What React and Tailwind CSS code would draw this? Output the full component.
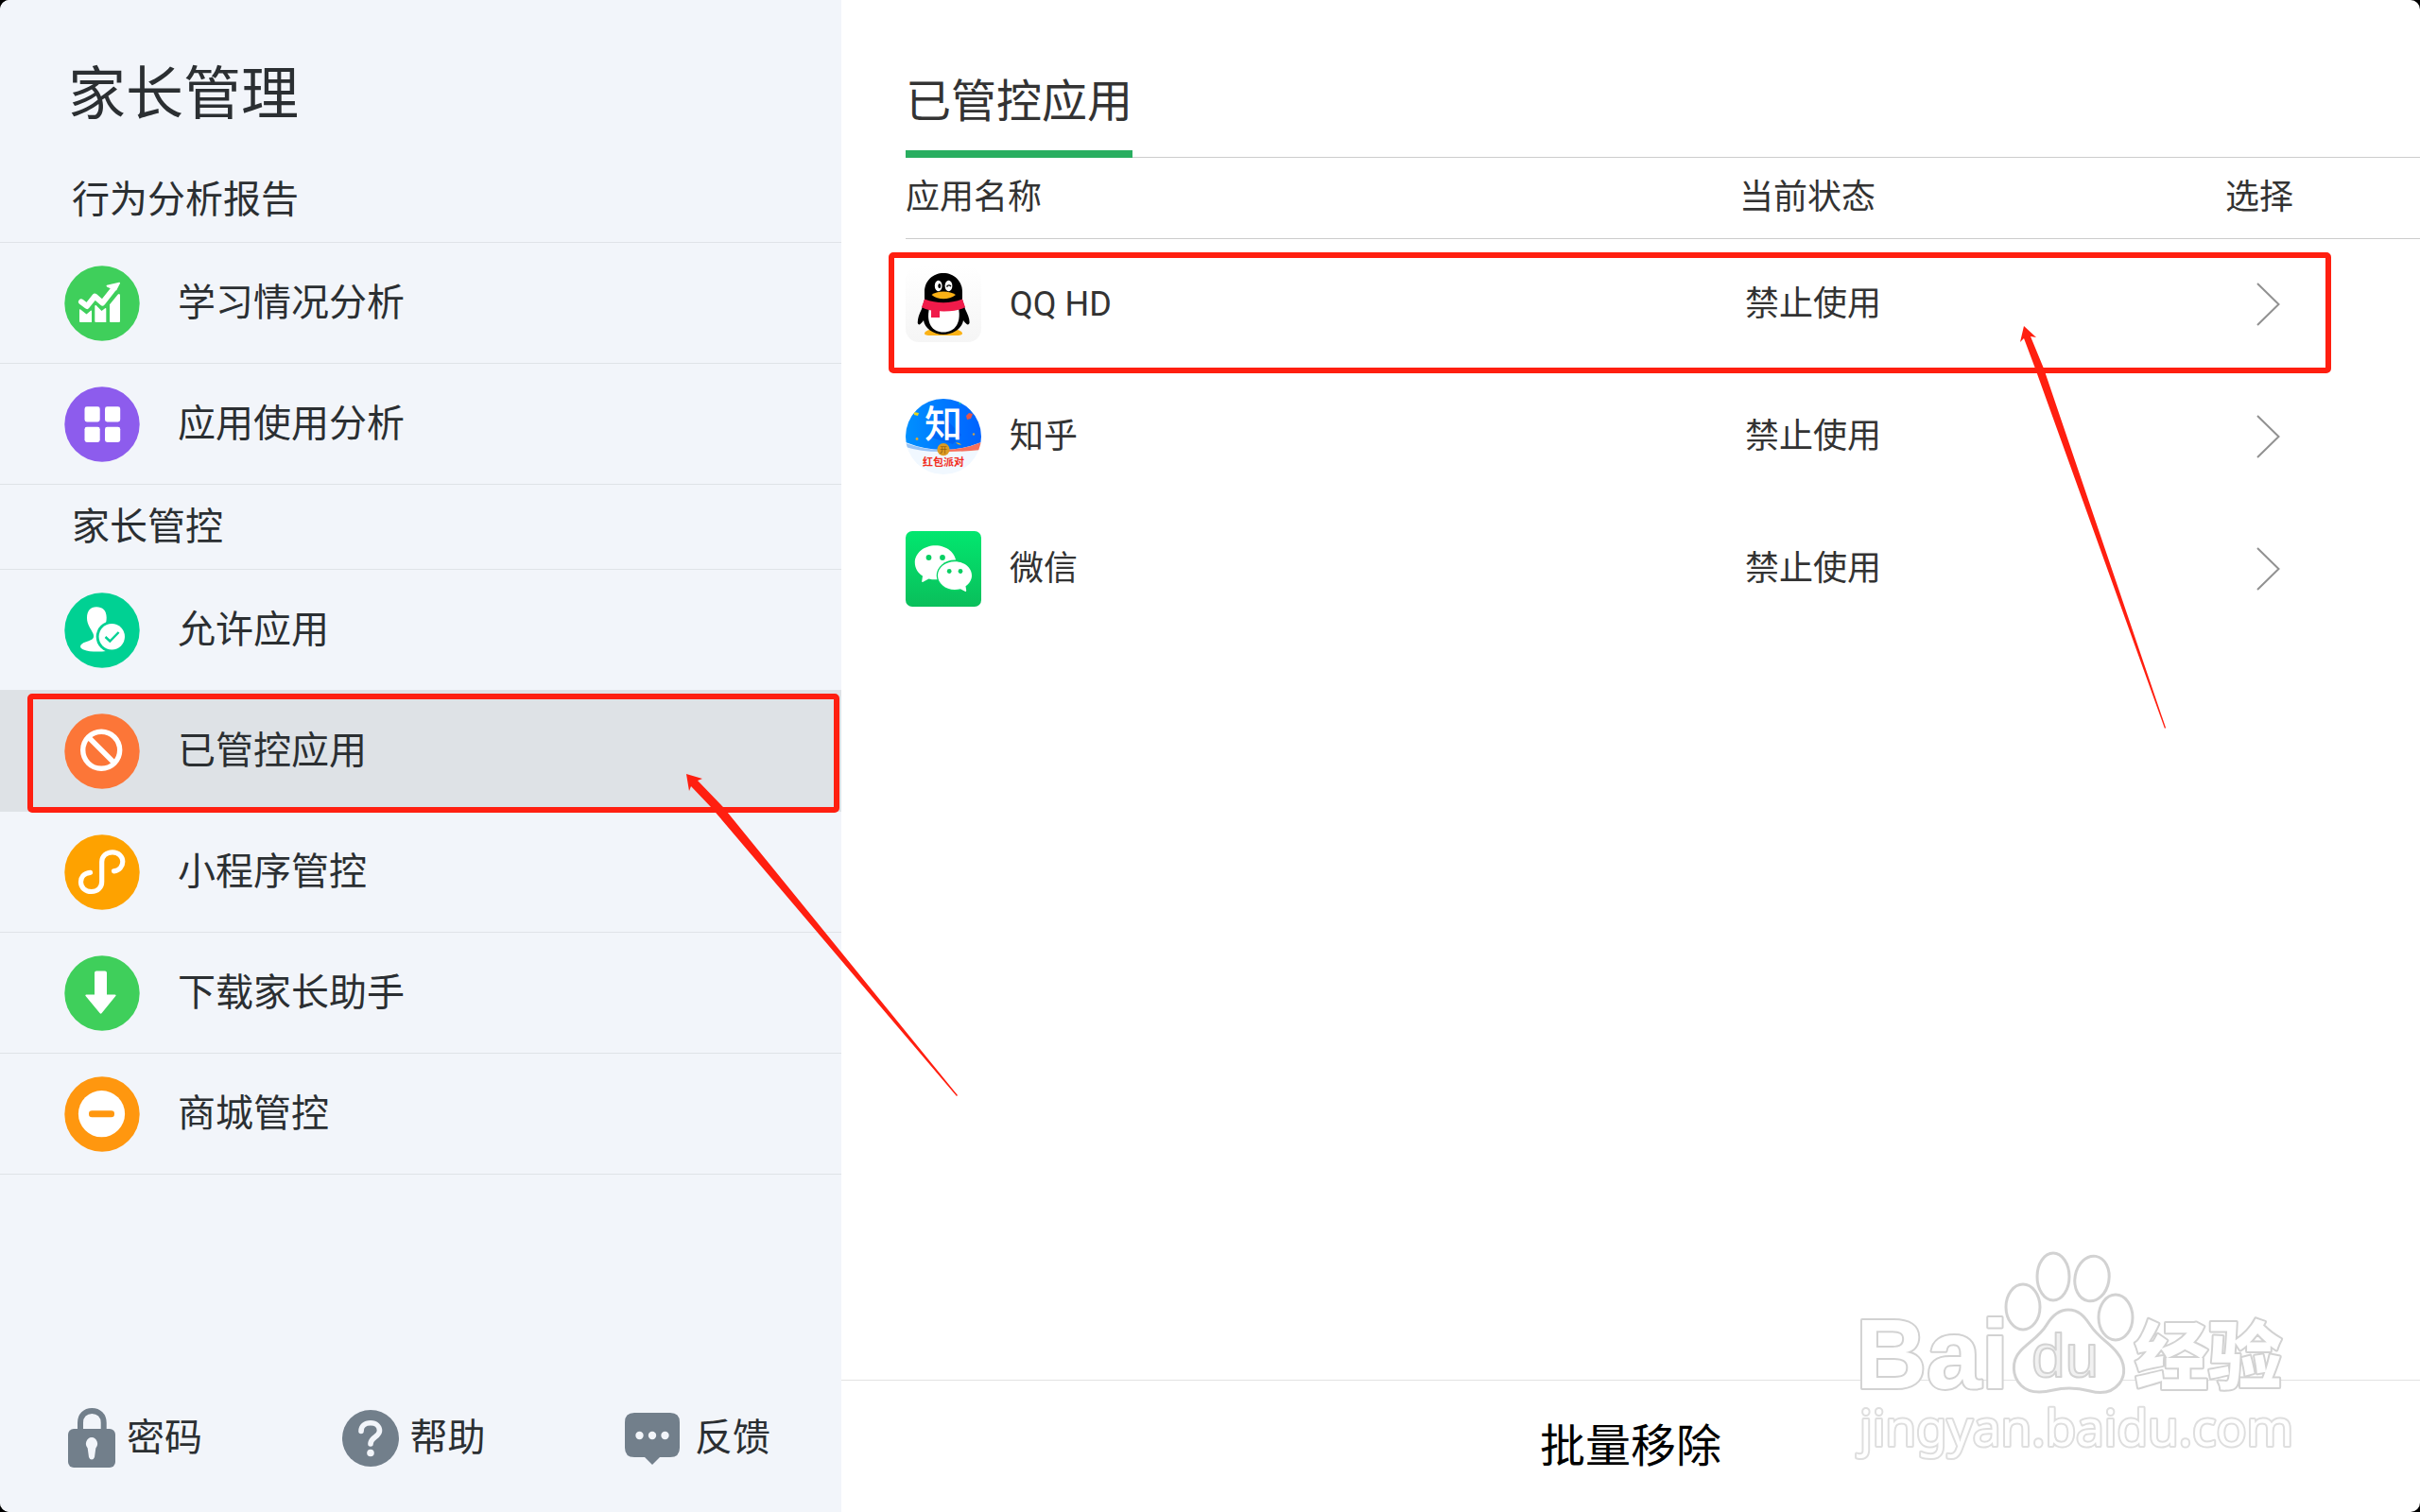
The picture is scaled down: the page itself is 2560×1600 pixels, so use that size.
import React, { useState } from "react";
import clsx from "clsx";

const ChartIcon = () => (
  <svg viewBox="0 0 80 80" className="size-20 shrink-0" aria-hidden="true">
    <circle cx="40" cy="40" r="39.7" fill="#3fcf5b" />
    <path
      d="M18 38.3 24 43 32.3 32.6 40.3 39.6 53 23.5"
      fill="none"
      stroke="#fff"
      strokeWidth="6"
      strokeLinecap="round"
      strokeLinejoin="round"
    />
    <path d="M45 20.8 58 17.8Q59.6 17.6 58.8 19.2L55 26.5 49.5 24.6 45.4 22.8Q43.6 21.4 45 20.8Z" fill="#fff" />
    <path
      d="M16 47q0-1.2 1.2-.4l6.3 5 4.5-3.9q1-.5 1 .6V60H17q-1 0-1-1ZM32.3 43q.2-1.5 1.3-.9l5.9 5.9 3.6-2.8q1.2-.8 1.2.5V60h-11q-1 0-1-1ZM48 41.3 56.8 30.4q2.2-1 2.2 1.2V59q0 1-1 1h-9q-1 0-1-1Z"
      fill="#fff"
    />
  </svg>
);

const GridIcon = () => (
  <svg viewBox="0 0 80 80" className="size-20 shrink-0" aria-hidden="true">
    <circle cx="40" cy="40" r="39.7" fill="#8d5ced" />
    <g fill="#fff">
      <rect x="21.5" y="21.3" width="16.2" height="16.2" rx="2.4" />
      <rect x="43" y="21.3" width="16.2" height="16.2" rx="2.4" />
      <rect x="21.5" y="42.8" width="16.2" height="16.2" rx="2.4" />
      <rect x="43" y="42.8" width="16.2" height="16.2" rx="2.4" />
    </g>
  </svg>
);

const AllowIcon = () => (
  <svg viewBox="0 0 80 80" className="size-20 shrink-0" aria-hidden="true">
    <circle cx="40" cy="40" r="39.7" fill="#00d193" />
    <path
      d="M34 15.3C40.5 15.3 44.7 19 44.7 26.5C44.7 33.5 42 37 40 41C38 45 41 50 46 54C50 57 50 61 44 62C38 63 26 63 20.5 60.5C17 59 16.2 57 18 55C20.5 52.3 25 51.8 28.5 50C31.5 48.5 31.5 46 30.5 43.5C28 38 24 34 24 27C24 19.5 27.5 15.3 34 15.3Z"
      fill="#fff"
    />
    <circle cx="50.3" cy="46.8" r="16.6" fill="#00d193" />
    <circle cx="50.3" cy="46.8" r="13.7" fill="#fff" />
    <path d="M43.5 47 48.3 51.5 57.6 42" fill="none" stroke="#00d193" strokeWidth="2.4" />
  </svg>
);

const BanIcon = () => (
  <svg viewBox="0 0 80 80" className="size-20 shrink-0" aria-hidden="true">
    <circle cx="40" cy="40" r="39.7" fill="#fc7638" />
    <g fill="none" stroke="#fff" strokeWidth="5.4">
      <circle cx="39.2" cy="38.8" r="19.5" />
      <path d="M25.5 25 53 52.5" />
    </g>
  </svg>
);

const MiniProgramIcon = () => (
  <svg viewBox="0 0 80 80" className="size-20 shrink-0" aria-hidden="true">
    <circle cx="40" cy="40" r="39.7" fill="#fea200" />
    <path
      d="M27.5 40.3C20 41 17.5 46 17.5 50.2C17.5 56 22 60.5 28.7 60.5C35.5 60.5 39.7 56 39.7 50V29C39.7 23 44.5 18.8 51 18.8C57.5 18.8 61.8 23.5 61.8 28.7C61.8 33.5 58.5 38.2 52.5 38.8"
      fill="none"
      stroke="#fff"
      strokeWidth="5.2"
      strokeLinecap="round"
    />
  </svg>
);

const DownloadIcon = () => (
  <svg viewBox="0 0 80 80" className="size-20 shrink-0" aria-hidden="true">
    <circle cx="40" cy="40" r="39.7" fill="#3fcf5b" />
    <path
      d="M34 16.5H43Q45 16.5 45 18.5V41.5H53.5Q55.5 41.5 54.3 43L39.7 61Q38.6 62.5 37.5 61L22.6 43Q21.5 41.5 23.3 41.5H32V18.5Q32 16.5 34 16.5Z"
      fill="#fff"
    />
  </svg>
);

const MinusIcon = () => (
  <svg viewBox="0 0 80 80" className="size-20 shrink-0" aria-hidden="true">
    <circle cx="40" cy="40" r="39.7" fill="#ff970f" />
    <circle cx="39.5" cy="39.7" r="24.6" fill="#fff" />
    <rect x="26" y="36.3" width="27" height="7" rx="3.3" fill="#ff970f" />
  </svg>
);

const LockIcon = () => (
  <svg viewBox="0 0 50 64" className="h-16 w-[50px] shrink-0" aria-hidden="true">
    <path d="M13 26V15.5C13 8 18 3 25.3 3C32.5 3 37.7 8 37.7 15.5V26" fill="none" stroke="#727f8b" strokeWidth="6" />
    <rect y="22" width="50" height="41" rx="6" fill="#727f8b" />
    <path d="M25 31a6.3 6.8 0 0 1 4.3 11.5L28 52Q27 54.5 25 54.5T22 52L20.7 42.5A6.3 6.8 0 0 1 25 31Z" fill="#f2f5fa" />
  </svg>
);

const HelpIcon = () => (
  <svg viewBox="0 0 60 60" className="size-[60px] shrink-0" aria-hidden="true">
    <circle cx="30" cy="30" r="30" fill="#727f8b" />
    <path
      d="M20 22.5C20 17 24 13.8 30 13.8C36 13.8 39.5 17.5 39.5 22C39.5 28.5 30 28.5 30 36"
      fill="none"
      stroke="#f2f5fa"
      strokeWidth="5.6"
      strokeLinecap="round"
    />
    <circle cx="30" cy="45.5" r="3.8" fill="#f2f5fa" />
  </svg>
);

const FeedbackIcon = () => (
  <svg viewBox="0 0 62 62" className="size-[62px] shrink-0" aria-hidden="true">
    <path d="M10 4H48Q58 4 58 14V41Q58 51 48 51H37L29 59 21 51H10Q0 51 0 41V14Q0 4 10 4Z" fill="#727f8b" />
    <g fill="#f2f5fa">
      <circle cx="15.5" cy="28" r="4.2" />
      <circle cx="29" cy="28" r="4.2" />
      <circle cx="42.5" cy="28" r="4.2" />
    </g>
  </svg>
);

const QQIcon = () => (
  <svg viewBox="0 0 80 80" className="size-20 shrink-0" aria-hidden="true">
    <defs>
      <linearGradient id="qqBg" x1="0" y1="0" x2="0" y2="1">
        <stop offset="0" stopColor="#fff" />
        <stop offset="1" stopColor="#f5f5f5" />
      </linearGradient>
    </defs>
    <rect width="80" height="80" rx="14" fill="url(#qqBg)" />
    <path d="M29 66C23 67 20 69 20 71Q20 73 27 73H53Q60 73 60 71C60 69 57 67 51 66Z" fill="#fbb216" />
    <path
      d="M40 7C51 7 60 15 60 27V35L63 45C66 51 68 56 67.5 60Q66 64 61 57C60 65 51 72 40 72C29 72 20 65 19 57Q14 64 12.8 60C12.5 56 14 51 17 45L20 35V27C20 15 29 7 40 7Z"
      fill="#000"
    />
    <path d="M25 44H56C59 60 52 69.5 40 69.5C28 69.5 21.5 60 25 44Z" fill="#fff" />
    <path d="M20 34.5Q40 42 60 34.5L63 43Q55 48 36 47.3V54H27V46.5Q20 45 17 43Z" fill="#f01b4a" />
    <ellipse cx="34.7" cy="20.5" rx="3.9" ry="5.7" fill="#fff" />
    <ellipse cx="45.5" cy="20.5" rx="3.9" ry="5.7" fill="#fff" />
    <ellipse cx="35.8" cy="20.5" rx="1.5" ry="2.5" fill="#000" />
    <path d="M43.5 21.5Q45.5 18.5 48 21" fill="none" stroke="#000" strokeWidth="1.4" />
    <path d="M27.5 30Q32 26.5 40 26.5T53 30Q47 34.3 40 34.3T27.5 30Z" fill="#fbb216" />
  </svg>
);

const ZhihuIcon = () => (
  <svg viewBox="0 0 80 80" className="size-20 shrink-0 overflow-visible font-['Noto_Sans_CJK_SC',sans-serif]">
    <defs>
      <linearGradient id="zhBg">
        <stop offset="0" stopColor="#0090ff" />
        <stop offset="1" stopColor="#0062ff" />
      </linearGradient>
      <clipPath id="zhClip">
        <circle cx="40" cy="40" r="40" />
      </clipPath>
    </defs>
    <g clipPath="url(#zhClip)">
      <rect width="80" height="80" fill="#f1f8ff" />
      <path d="M0 0H80V46Q60 54 40 54T0 46Z" fill="url(#zhBg)" />
      <path d="M0 47Q20 54 36 54V56Q16 56 0 51Z" fill="#9ac4f5" />
      <path d="M44 54Q64 53 80 46V54Q62 56 44 56Z" fill="#f6705c" />
      <path d="M35 14 59 38 50 48 27 41Z" fill="#0052e8" opacity=".45" />
      <path d="M9 14l5 1-1 3-4-1Z" fill="#e8d51c" />
      <path d="M64 18l3-3 4 1-2 5-4 1Z" fill="#e4554a" />
      <path d="M56 3l3 2-2 1Z" fill="#19d39a" />
      <path d="M53 46l4 1 2 2-4-1Z" fill="#e8b51c" />
      <circle cx="12" cy="42.5" r="1.4" fill="#e0a92c" />
      <circle cx="72" cy="37.5" r="1.2" fill="#c9a04a" />
      <circle cx="40" cy="53.7" r="6.6" fill="#dd9b22" />
    </g>
    <text x="40" y="41" fontSize="40" fontWeight="500" textAnchor="middle" fill="#fff">知</text>
    <text x="40" y="57" fontSize="8" textAnchor="middle" fill="#80520c">开</text>
    <text x="40" y="71" fontSize="11" fontWeight="700" textAnchor="middle" fill="#f22d1d">红包派对</text>
  </svg>
);

const WechatIcon = () => (
  <svg viewBox="0 0 80 80" className="size-20 shrink-0" aria-hidden="true">
    <defs>
      <linearGradient id="wxBg" x1="0" y1="0" x2="0" y2="1">
        <stop offset="0" stopColor="#02e76f" />
        <stop offset="1" stopColor="#0abf5b" />
      </linearGradient>
    </defs>
    <rect width="80" height="80" rx="7" fill="url(#wxBg)" />
    <path
      d="M31.5 15.3C43.5 15.3 53.3 23.3 53.3 33.3S43.5 51.3 31.5 51.3C29 51.3 27 51 24.5 50.4L18.5 53.8Q17 54.4 17.2 53L18 47.5C13 44.3 9.8 39.3 9.8 33.3C9.8 23.3 19.5 15.3 31.5 15.3Z"
      fill="#fff"
    />
    <ellipse cx="52" cy="47" rx="19.3" ry="16.4" fill="#06d465" />
    <path
      d="M52 32.2C62 32.2 70 38.8 70 47C70 51.5 67.5 55.5 63.5 58.2L64.2 62.8Q64.2 64.5 62.8 63.8L58 61.2C56 61.7 54 62 52 62C42 62 34 55.2 34 47S42 32.2 52 32.2Z"
      fill="#fff"
    />
    <g fill="#08cf62">
      <circle cx="24.5" cy="28" r="2.9" />
      <circle cx="39" cy="28" r="2.9" />
      <circle cx="46.2" cy="42.5" r="2.4" />
      <circle cx="58" cy="42.5" r="2.4" />
    </g>
  </svg>
);

const reportMenu = [
  { id: "study", label: "学习情况分析", Icon: ChartIcon },
  { id: "usage", label: "应用使用分析", Icon: GridIcon },
];

const controlMenu = [
  { id: "allowed", label: "允许应用", Icon: AllowIcon },
  { id: "blocked", label: "已管控应用", Icon: BanIcon },
  { id: "mini", label: "小程序管控", Icon: MiniProgramIcon },
  { id: "download", label: "下载家长助手", Icon: DownloadIcon },
  { id: "store", label: "商城管控", Icon: MinusIcon },
];

const footerMenu = [
  { id: "password", label: "密码", Icon: LockIcon },
  { id: "help", label: "帮助", Icon: HelpIcon },
  { id: "feedback", label: "反馈", Icon: FeedbackIcon },
];

const apps = [
  { id: "qq", name: "QQ HD", status: "禁止使用", Icon: QQIcon, marked: true },
  { id: "zhihu", name: "知乎", status: "禁止使用", Icon: ZhihuIcon },
  { id: "wechat", name: "微信", status: "禁止使用", Icon: WechatIcon },
];

const MenuSection = ({ title, items, current, onSelect }) => (
  <section>
    <h2 className="flex h-[90px] items-center border-b border-[#dfe3e7] pl-[76px] text-[40px] leading-none">
      {title}
    </h2>
    <ul>
      {items.map(({ id, label, Icon }) => (
        <li key={id} className="relative">
          <button
            type="button"
            onClick={() => onSelect(id)}
            className={clsx(
              "flex h-32 w-full items-center gap-10 border-b border-[#dfe3e7] pl-[68px] text-[40px] leading-none",
              current === id && "bg-[#dee2e6]"
            )}
          >
            <Icon />
            {label}
          </button>
          {id === "blocked" && (
            <span className="pointer-events-none absolute top-[3px] right-[2px] -bottom-[1px] left-[29px] rounded-[5px] border-[6px] border-[#ff1f10]" />
          )}
        </li>
      ))}
    </ul>
  </section>
);

const Watermark = () => (
  <svg
    viewBox="1950 1310 490 250"
    className="pointer-events-none absolute right-[120px] bottom-10 h-[250px] w-[490px]"
    fill="#fff"
    stroke="#d2d2d2"
    strokeWidth="4"
    strokeLinejoin="round"
  >
    <g className="[paint-order:stroke]">
      <text x="1963" y="1469" fontSize="104" fontWeight="700" className="font-['Liberation_Sans',sans-serif]">Bai</text>
      <text x="2258" y="1464" fontSize="78" fontWeight="900" className="font-['Noto_Sans_CJK_SC',sans-serif]">经验</text>
      <text x="1967" y="1530" fontSize="53" stroke="#dedede" className="font-['Noto_Sans',sans-serif]">jingyan.baidu.com</text>
    </g>
    <g strokeWidth="3">
      <ellipse cx="2140" cy="1383" rx="18" ry="24" />
      <ellipse cx="2172" cy="1351" rx="17" ry="25" />
      <ellipse cx="2213" cy="1353" rx="18" ry="24" transform="rotate(10 2213 1353)" />
      <ellipse cx="2238" cy="1394" rx="18" ry="24" />
      <path d="M2188 1386C2199 1386 2205 1393 2211 1402C2220 1416 2232 1421 2240 1432C2248 1442 2249 1455 2242 1464C2234 1474 2222 1475 2211 1472C2196 1468 2184 1468 2172 1471C2160 1474 2146 1474 2138 1466C2128 1456 2128 1440 2137 1430C2145 1421 2158 1414 2165 1402C2171 1392 2178 1386 2188 1386Z" />
    </g>
    <text x="2149" y="1457" fontSize="64" className="font-['Liberation_Sans',sans-serif]" fill="#f1f1f1" strokeWidth="2">du</text>
  </svg>
);

// hand-drawn pointers, thick at the head and thin at the tail
const Arrows = () => (
  <svg className="pointer-events-none absolute inset-0 h-full w-full" fill="#ff1f10" aria-hidden="true">
    <path d="M726 819 743 824 738 826 765 854 1013 1159 1012 1160 752 854 731 832 729 837Z" />
    <path d="M2141 345 2154 357 2148 356 2162 390 2291 770 2290 771 2153 390 2141 358 2137 362Z" />
  </svg>
);

const App = () => {
  const [current, setCurrent] = useState("blocked");

  return (
    <div className="bg-black font-[Roboto,'Noto_Sans_CJK_SC',sans-serif] font-normal text-[#2b2f32]">
      <div className="relative flex min-h-screen overflow-hidden rounded-[10px] bg-white">
        <aside className="flex w-[890px] shrink-0 flex-col bg-[#f2f5fa]">
          <h1 className="pt-[70px] pb-9 pl-[72px] text-[61px] leading-[61px]">家长管理</h1>
          <nav>
            <MenuSection title="行为分析报告" items={reportMenu} current={current} onSelect={setCurrent} />
            <MenuSection title="家长管控" items={controlMenu} current={current} onSelect={setCurrent} />
          </nav>
          <footer className="mt-auto flex justify-between pr-[75px] pb-[46px] pl-[72px]">
            {footerMenu.map(({ id, label, Icon }) => (
              <button key={id} type="button" className="flex h-16 items-center gap-3 text-[40px] leading-none">
                <Icon />
                {label}
              </button>
            ))}
          </footer>
        </aside>

        <main className="flex min-w-0 flex-1 flex-col text-[#333]">
          <header className="ml-[68px] flex h-[167px] items-end border-b border-[#ccc]">
            <h2 className="-mb-px border-b-8 border-[#29ae60] pb-[27px] text-[48px] leading-[48px]">已管控应用</h2>
          </header>
          <div className="ml-[68px]">
            <table className="w-full table-fixed text-left text-[36px] leading-none">
              <colgroup>
                <col />
                <col className="w-[514px]" />
                <col className="w-[206px]" />
              </colgroup>
              <thead>
                <tr className="h-[85px] border-b border-[#ccc]">
                  <th className="p-0 font-normal">应用名称</th>
                  <th className="p-0 font-normal">当前状态</th>
                  <th className="p-0 font-normal">选择</th>
                </tr>
              </thead>
              <tbody>
                {apps.map(({ id, name, status, Icon, marked }) => (
                  <tr key={id} className="relative h-[140px]">
                    <td className="p-0">
                      <div className="flex items-center gap-[30px]">
                        <Icon />
                        {name}
                      </div>
                      {marked && (
                        <span className="pointer-events-none absolute top-[15px] right-[94px] -bottom-[3px] -left-[18px] rounded-[5px] border-[6px] border-[#ff1f10]" />
                      )}
                    </td>
                    <td className="py-0 pr-0 pl-1.5">{status}</td>
                    <td className="py-0 pr-0 pl-8">
                      <button type="button" aria-label={name} className="block">
                        <svg viewBox="0 0 28 48" className="h-12 w-7" fill="none" stroke="#919191" strokeWidth="2">
                          <path d="M2 2 24.5 24 2 46" />
                        </svg>
                      </button>
                    </td>
                  </tr>
                ))}
              </tbody>
            </table>
          </div>
          <div className="mt-auto flex h-[140px] border-t border-[#e3e3e3]">
            <button type="button" className="flex-1 text-[48px] leading-none text-black">
              批量移除
            </button>
          </div>
        </main>

        <Watermark />
        <Arrows />
      </div>
    </div>
  );
};

export default App;
